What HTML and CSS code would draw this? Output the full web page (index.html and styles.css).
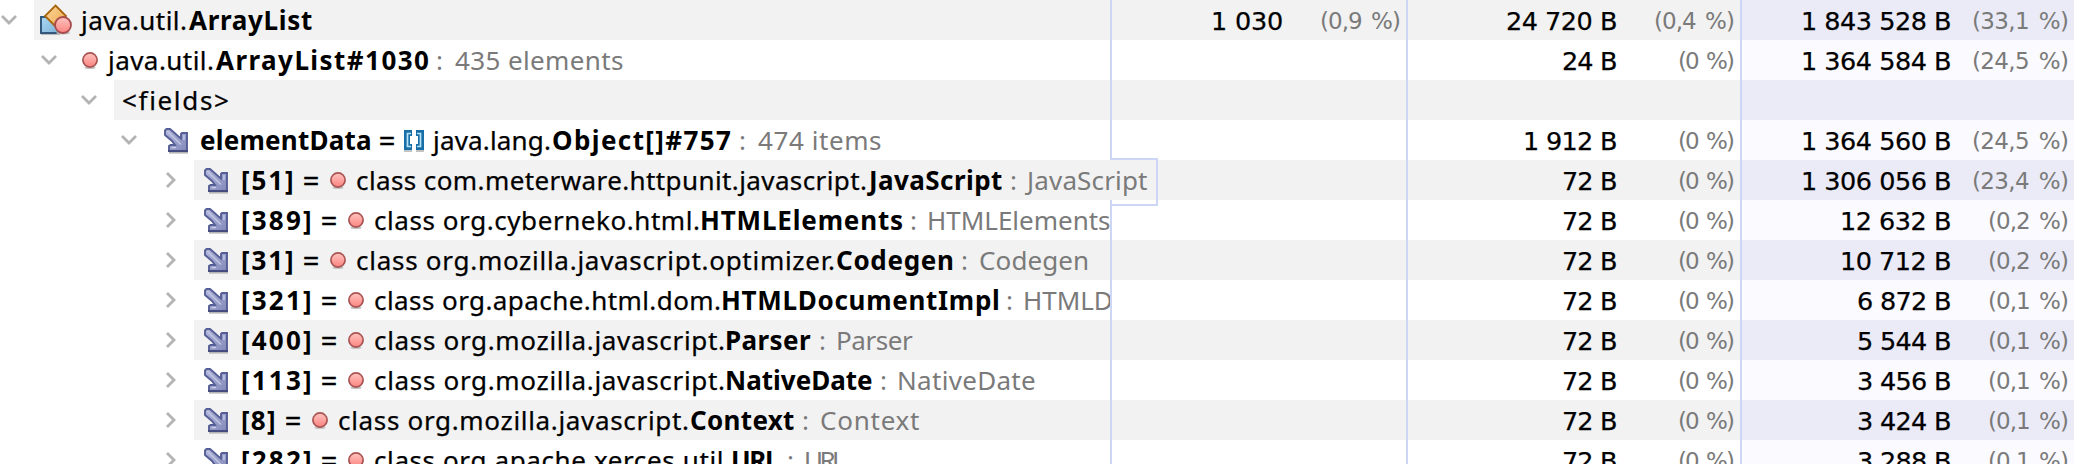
FILE: index.html
```html
<!DOCTYPE html>
<html lang="en">
<head>
<meta charset="utf-8">
<title>Heap objects</title>
<link rel="stylesheet" href="styles.css">
</head>
<body>
<svg class="defs" aria-hidden="true">
  <defs>
    <linearGradient id="g-red" x1="0" y1="0" x2="0" y2="1"><stop offset="0" stop-color="#ffc4c0"/><stop offset="1" stop-color="#fa8480"/></linearGradient>
    <linearGradient id="g-orange" x1="0" y1="0" x2="1" y2="1"><stop offset="0" stop-color="#fbd79c"/><stop offset="1" stop-color="#efa94c"/></linearGradient>
    <linearGradient id="g-blue" x1="0" y1="0" x2="1" y2="1"><stop offset="0" stop-color="#a9d8f2"/><stop offset="1" stop-color="#7fb2d8"/></linearGradient>
    <linearGradient id="g-arrow" x1="0" y1="0" x2="1" y2="1"><stop offset="0" stop-color="#b3b9dc"/><stop offset="1" stop-color="#8188b8"/></linearGradient>
  </defs>
  <symbol id="down" viewBox="0 0 18 12"><path d="M2 2 9 9 16 2"/></symbol>
  <symbol id="right" viewBox="0 0 12 18"><path d="M2 2 9 9 2 16"/></symbol>
  <symbol id="class" viewBox="0 0 32 32">
    <path d="M1 30.500H20" stroke="#b9b9b9" stroke-width="1"/>
    <path d="M1 13H19V29H1Z" fill="url(#g-blue)" stroke="#34587c" stroke-width="2"/>
    <path d="M15.500 1.500 26 12 15.500 22.500 5 12Z" fill="url(#g-orange)" stroke="#a8640f" stroke-width="1.800"/>
    <ellipse cx="23" cy="29" rx="7" ry="1.500" fill="#b5b5b5"/>
    <circle cx="23" cy="21" r="8" fill="url(#g-red)" stroke="#a84a4c" stroke-width="1.800"/>
  </symbol>
  <symbol id="dot" viewBox="0 0 16 18">
    <ellipse cx="8" cy="15.500" rx="5.500" ry="1.500" fill="#c4c4c4"/>
    <circle cx="8" cy="8" r="7.100" fill="url(#g-red)" stroke="#a95353" stroke-width="1.700"/>
  </symbol>
  <symbol id="arrow" viewBox="0 0 24 26">
    <path d="M5 24.800H24" stroke="#b4b4b4" stroke-width="1.600"/>
    <path d="M1 2.500 2.500 1H6L14.500 8.500 17 10.500V6L18 5H23V23H5V18L6.500 17H11L8 13 1 7Z" fill="url(#g-arrow)" stroke="#555e96" stroke-width="1.900"/>
    <path d="M3.500 3.500 17 16.500M20 7V12M7.500 19.500H12" fill="none" stroke="#c3c8e6" stroke-width="1.400"/>
    <path d="M4 23H24" stroke="#444b7e" stroke-width="1.800"/>
  </symbol>
  <symbol id="array" viewBox="0 0 20 23">
    <path d="M0 21H8M12 21H20" stroke="#c4c4c4" stroke-width="2"/>
    <path d="M8 3H3V17H8M12 3H17V17H12" fill="none" stroke="#186fa8" stroke-width="6"/>
    <path d="M7 3.500H3.500V16.500H7M13 3.500H16.500V16.500H13" fill="none" stroke="#b9e2f8" stroke-width="1.700"/>
  </symbol>
</svg>
<main class="table" id="table"></main>
<script src="table.js"></script>
</body>
</html>
```

FILE: styles.css
```css
* { box-sizing: border-box; }

body {
  margin: 0;
  width: 2074px;
  height: 464px;
  overflow: hidden;
  background: #fff;
  color: #000;
  font-family: "Noto Sans", "Open Sans", sans-serif;
  font-size: 26px;
  line-height: 40px;
}

.defs { position: absolute; width: 0; height: 0; }

.table { display: flex; flex-direction: column; }

.row {
  display: grid;
  grid-template-columns: 1112px 296px 334px 332px;
  height: 40px;
  background: #fff;
}
.row:nth-child(odd) { background: #f2f2f2; }

.name, .num {
  display: flex;
  height: 40px;
  border-right: 2px solid #cdd7f5;
  white-space: pre;
  overflow: hidden;
}
.num {
  justify-content: flex-end;
  padding-right: 7px;
  font-family: "DejaVu Sans", sans-serif;
  font-size: 25.5px;
  line-height: 42px;
}
.num:last-child { border-right: 0; background: #fbfaff; }
.row:nth-child(odd) .num:last-child { background: #ebebf8; }
.pct { display: flex; justify-content: flex-end; width: 117px; color: #7a7a7a; font-size: 23px; line-height: 43px; }
.pct .fit { word-spacing: 3px; }

.name > * { flex: none; }
.indent { display: flex; justify-content: flex-end; align-items: center; background: #fff; }
.chevron { fill: none; stroke: #b3b3b3; stroke-width: 2.8; }
.chevron.down { width: 18px; height: 12px; margin-right: 16px; }
.chevron.right { width: 12px; height: 18px; margin-right: 17px; }

.icon { display: block; }
.icon.class { width: 32px; height: 32px; margin: 4px 7px 0 6px; }
.icon.dot { width: 16px; height: 18px; margin: 12px 11px 0 0; }
.icon.arrow { width: 24px; height: 26px; margin: 8px 14px 0 10px; }
.icon.array { width: 20px; height: 23px; margin: 10px 7px 0 0; }
.instance > .icon.dot { margin: 12px 8px 0 8px; }
.field > .icon.arrow { margin-right: 13px; }
.fields > .plain { padding-left: 9px; }

.fit { display: block; -webkit-text-stroke: 0.25px currentColor; }
.bold { font-weight: 700; -webkit-text-stroke: 0; }
.pkg { margin-right: 3px; }
.type { color: #7a7a7a; -webkit-text-stroke: 0; }
.colon { width: 27px; padding-left: 8px; color: #7a7a7a; }
.equals { width: 38px; text-align: center; font-size: 29px; -webkit-text-stroke: 0.4px currentColor; }
.field > .equals { width: 34px; }

/* The hovered name is wider than its column and spills over the next one. */
.hovered { position: relative; z-index: 1; overflow: visible; border-right-color: transparent; }
.hovered .pkg { margin-right: 1px; }
.hovered .colon { width: 22px; }
.hovered::after {
  content: "";
  position: absolute;
  left: 1110px;
  top: -2px;
  width: 46px;
  height: 44px;
  border: 2px solid #cdd7f5;
  border-left: 0;
}
```

FILE: table.js
```js
// Text segments are [text, drawn width]; the tracking is computed to fill that width.
const element = (index, pkg, name, type, size, pct) => ({
  kind: "element", depth: 4, index, pkg, name, type,
  nums: [null, [["72 B", 52], ["(0 %)", 54]], [size, pct]]
});

const rows = [
  { kind: "root", depth: 0, pkg: ["java.util.", 107], name: ["ArrayList", 123],
    nums: [[["1 030", 69], ["(0,9 %)", 78]], [["24 720 B", 109], ["(0,4 %)", 78]], [["1 843 528 B", 147], ["(33,1 %)", 94]]] },
  { kind: "instance", depth: 1, pkg: ["java.util.", 107], name: ["ArrayList#1030", 212], type: ["435 elements", 168],
    nums: [null, [["24 B", 53], ["(0 %)", 54]], [["1 364 584 B", 147], ["(24,5 %)", 94]]] },
  { kind: "fields", depth: 2, nums: [null, null, null] },
  { kind: "field", depth: 3, index: ["elementData", 169], pkg: ["java.lang.", 119], name: ["Object[]#757", 178], type: ["474 items", 123],
    nums: [null, [["1 912 B", 91], ["(0 %)", 54]], [["1 364 560 B", 147], ["(24,5 %)", 94]]] },
  element(["[51]", 50], ["class com.meterware.httpunit.javascript.", 509], ["JavaScript", 135], ["JavaScript", 123], ["1 306 056 B", 147], ["(23,4 %)", 94]),
  element(["[389]", 68], ["class org.cyberneko.html.", 324], ["HTMLElements", 200], ["HTMLElements", 181], ["12 632 B", 108], ["(0,2 %)", 78]),
  element(["[31]", 50], ["class org.mozilla.javascript.optimizer.", 477], ["Codegen", 116], ["Codegen", 107], ["10 712 B", 108], ["(0,2 %)", 78]),
  element(["[321]", 68], ["class org.apache.html.dom.", 345], ["HTMLDocumentImpl", 275], ["HTMLDocumentImpl", 250], ["6 872 B", 92], ["(0,1 %)", 78]),
  element(["[400]", 68], ["class org.mozilla.javascript.", 349], ["Parser", 84], ["Parser", 75], ["5 544 B", 92], ["(0,1 %)", 78]),
  element(["[113]", 68], ["class org.mozilla.javascript.", 349], ["NativeDate", 145], ["NativeDate", 136], ["3 456 B", 92], ["(0,1 %)", 78]),
  element(["[8]", 32], ["class org.mozilla.javascript.", 349], ["Context", 103], ["Context", 98], ["3 424 B", 92], ["(0,1 %)", 78]),
  element(["[282]", 68], ["class org.apache.xerces.util.", 355], ["URL", 46], ["URL", 39], ["3 288 B", 92], ["(0,1 %)", 78])
];

const escapeText = s => s.replace(/</g, "&lt;").replace(/>/g, "&gt;");
const seg = (s, cls) => s ? `<span class="fit ${cls}" data-width="${s[1]}">${escapeText(s[0])}</span>` : "";
const icon = id => `<svg class="icon ${id}"><use href="#${id}"/></svg>`;
const num = n => `<div class="num">${n ? seg(n[0], "value") + `<div class="pct">${seg(n[1], "type")}</div>` : ""}</div>`;

function nameCell(r) {
  const dir = r.kind === "element" ? "right" : "down";
  let html = `<div class="indent" style="width:${34 + 40 * r.depth}px"><svg class="chevron ${dir}"><use href="#${dir}"/></svg></div>`;
  if (r.kind === "fields") return html + `<div class="plain">${seg(["<fields>", 105], "")}</div>`;
  if (r.kind === "root") html += icon("class");
  if (r.kind === "instance") html += icon("dot");
  if (r.index) {
    html += icon("arrow") + seg(r.index, "bold") + `<span class="equals">=</span>`;
    html += icon(r.kind === "field" ? "array" : "dot");
  }
  html += `<div class="pkg">${seg(r.pkg, "")}</div>` + seg(r.name, "bold");
  if (r.type) html += `<span class="colon">:</span>` + seg(r.type, "type");
  return html;
}

document.getElementById("table").innerHTML = rows.map((r, i) =>
  `<div class="row"><div class="name ${r.kind}${i === 4 ? " hovered" : ""}">${nameCell(r)}</div>${r.nums.map(num).join("")}</div>`
).join("");

const ctx = document.createElement("canvas").getContext("2d");
document.querySelectorAll(".fit").forEach(el => {
  const cs = getComputedStyle(el);
  const text = el.textContent;
  ctx.font = `${cs.fontWeight} ${cs.fontSize} ${cs.fontFamily}`;
  const m = ctx.measureText(text);
  const left = -m.actualBoundingBoxLeft;
  const spaces = (text.split(" ").length - 1) * (parseFloat(cs.wordSpacing) || 0);
  const drawn = m.actualBoundingBoxRight - left + spaces;
  const tracking = (el.dataset.width - drawn) / (text.length - 1);
  el.style.letterSpacing = `${tracking}px`;
  el.style.marginLeft = `${-left}px`;
  el.style.marginRight = `${m.actualBoundingBoxRight - m.width - tracking}px`;
});
```
